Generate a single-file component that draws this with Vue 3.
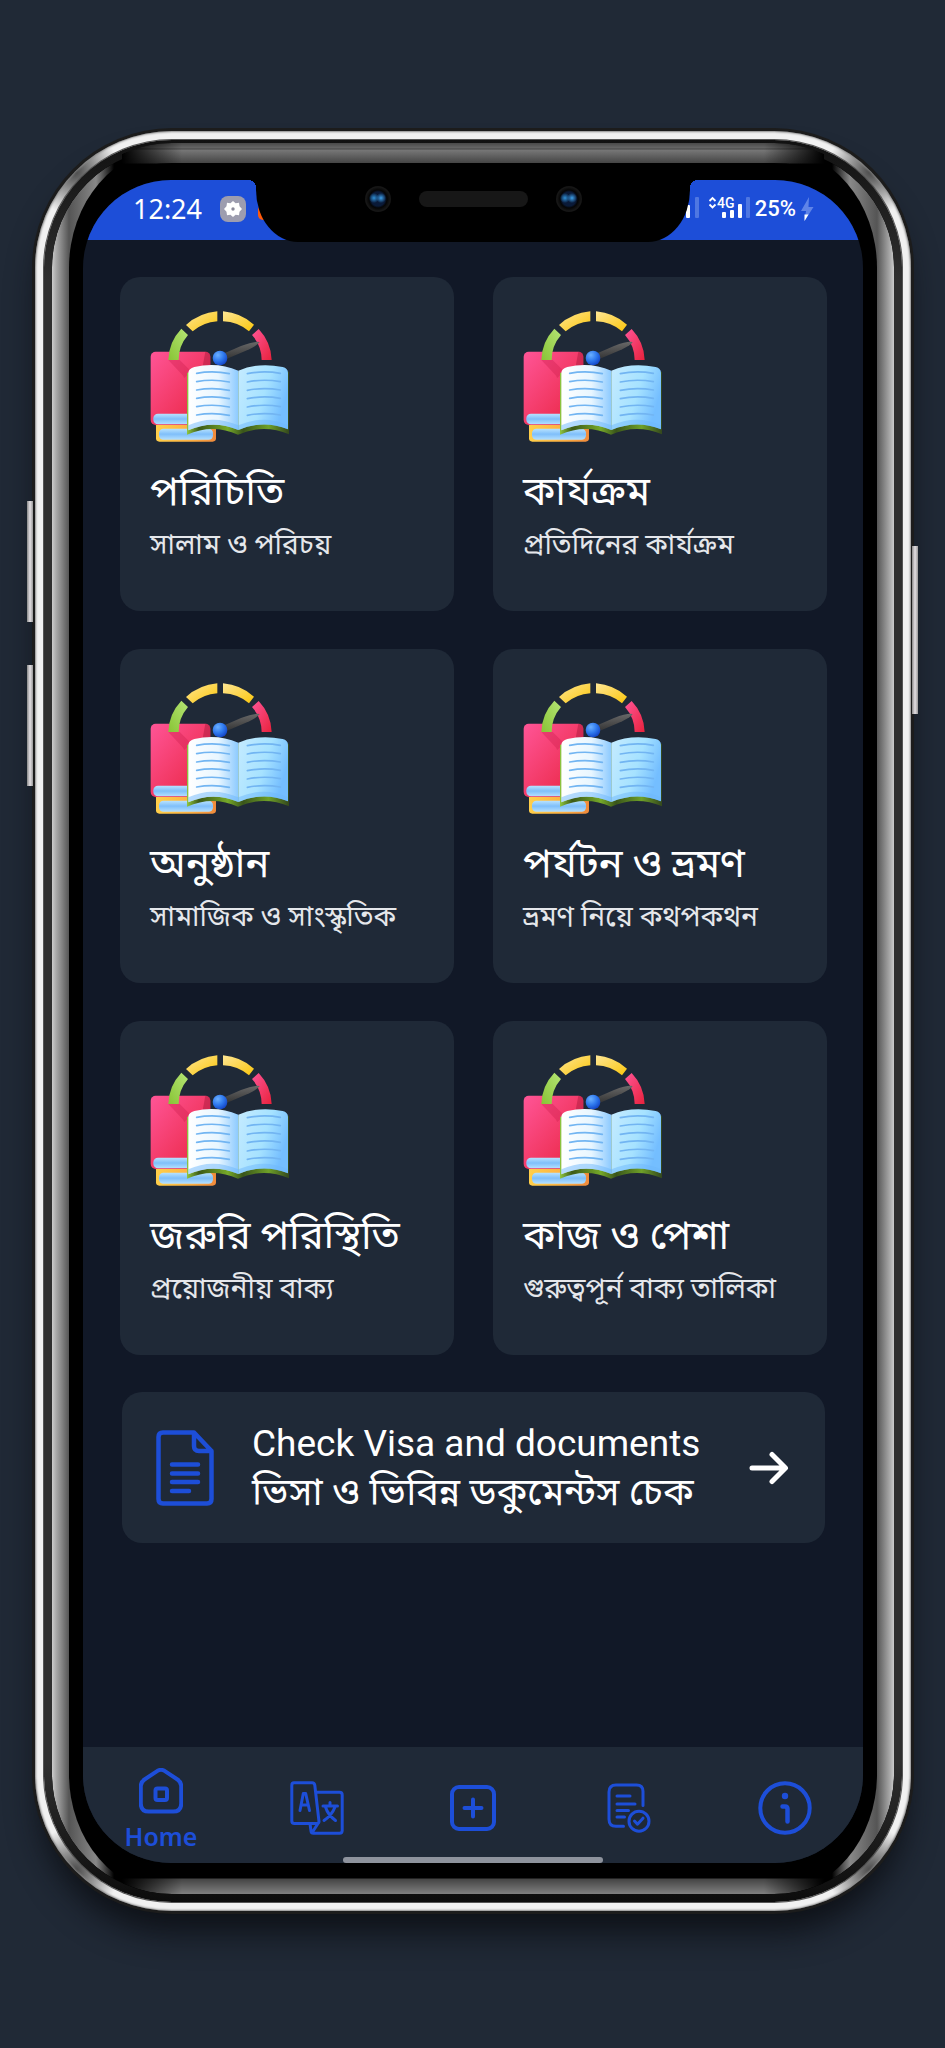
<script setup>
const topics = [
  { title: 'পরিচিতি', text: 'সালাম ও পরিচয়' },
  { title: 'কার্যক্রম', text: 'প্রতিদিনের কার্যক্রম' },
  { title: 'অনুষ্ঠান', text: 'সামাজিক ও সাংস্কৃতিক' },
  { title: 'পর্যটন ও ভ্রমণ', text: 'ভ্রমণ নিয়ে কথপকথন' },
  { title: 'জরুরি পরিস্থিতি', text: 'প্রয়োজনীয় বাক্য' },
  { title: 'কাজ ও পেশা', text: 'গুরুত্বপূর্ন বাক্য তালিকা' },
]
const pageLines = [218, 243, 268, 293, 318, 343]
</script>

<template>
  <div class="page">
    <svg class="defs" width="0" height="0" aria-hidden="true">
      <defs>
        <linearGradient id="g-green" x1="1" y1="0" x2="0" y2="1"><stop offset="0" stop-color="#b5e575" /><stop offset="1" stop-color="#88c435" /></linearGradient>
        <linearGradient id="g-yellow" x1="0" y1="0" x2="1" y2="1"><stop offset="0" stop-color="#fee695" /><stop offset="1" stop-color="#fbc60c" /></linearGradient>
        <linearGradient id="g-pink" x1="0" y1="0" x2="1" y2="1"><stop offset="0" stop-color="#ff5597" /><stop offset="1" stop-color="#e8223c" /></linearGradient>
        <linearGradient id="g-needle" x1="0" y1="0" x2="0" y2="1"><stop offset="0" stop-color="#686868" /><stop offset="1" stop-color="#353535" /></linearGradient>
        <radialGradient id="g-ball" cx=".35" cy=".3" r=".8"><stop offset="0" stop-color="#6bb0ff" /><stop offset=".5" stop-color="#2f79ee" /><stop offset="1" stop-color="#0d3bc0" /></radialGradient>
        <linearGradient id="g-left" x1="0" y1="0" x2="1" y2="0"><stop offset="0" stop-color="#fff" /><stop offset=".6" stop-color="#e8f6ff" /><stop offset="1" stop-color="#8ccaff" /></linearGradient>
        <linearGradient id="g-right" x1="0" y1="0" x2="1" y2=".4"><stop offset="0" stop-color="#c5ebff" /><stop offset=".6" stop-color="#a6e2ff" /><stop offset="1" stop-color="#74beff" /></linearGradient>
        <linearGradient id="g-cover" x1="0" y1="0" x2="1" y2="0"><stop offset="0" stop-color="#8fc640" /><stop offset=".12" stop-color="#3c5a18" /><stop offset=".4" stop-color="#76a929" /><stop offset=".55" stop-color="#39541a" /><stop offset=".8" stop-color="#6fa128" /><stop offset="1" stop-color="#33471d" /></linearGradient>
        <linearGradient id="g-orange" x1="0" y1="0" x2="1" y2="0"><stop offset="0" stop-color="#ffcf4a" /><stop offset=".6" stop-color="#fcae42" /><stop offset="1" stop-color="#f08a3c" /></linearGradient>
        <linearGradient id="g-paper" x1="0" y1="0" x2="0" y2="1"><stop offset="0" stop-color="#b9e3ff" /><stop offset=".5" stop-color="#7fbffa" /><stop offset="1" stop-color="#b4e0ff" /></linearGradient>
        <symbol id="books" viewBox="27 30 420 396">
          <rect x="45" y="366" width="180" height="59" rx="10" fill="url(#g-orange)" />
          <rect x="54" y="386" width="162" height="33" rx="13" fill="url(#g-paper)" />
          <rect x="29" y="155" width="179" height="220" rx="15" fill="url(#g-pink)" />
          <path d="M193 155q15 0 15 15v40h-25z" fill="#a4183c" opacity=".45" />
          <path d="M82 180h34l34 34-20 20-5-8z" fill="#c21747" opacity=".3" />
          <rect x="37" y="341" width="120" height="32" rx="14" fill="url(#g-paper)" />
          <path d="M82 180A155 146 0 0 1 121 86L141 105A124 117 0 0 0 113 180Z" fill="url(#g-green)" />
          <path d="M135 75A155 146 0 0 1 229 34V64A124 117 0 0 0 155 94Z" fill="url(#g-yellow)" />
          <path d="M246 34A155 146 0 0 1 339 74L324 94A124 117 0 0 0 246 64Z" fill="url(#g-yellow)" />
          <path d="M353 87A155 146 0 0 1 392 180H362A124 117 0 0 0 333 105Z" fill="url(#g-pink)" />
          <path d="M250 160L300 138Q340 123 356 126Q352 134 325 148L258 176Z" fill="url(#g-needle)" />
          <circle cx="237" cy="174" r="22" fill="url(#g-ball)" />
          <path d="M138 218V404Q215 370 291 404Q368 370 444 403V215Z" fill="url(#g-cover)" />
          <path d="M142 218Q143 206 160 201Q230 185 292 212V390Q215 358 142 391Z" fill="url(#g-left)" />
          <path d="M292 212Q352 186 425 201Q441 205 441 219V388Q368 358 292 390Z" fill="url(#g-right)" />
          <path d="M142 376Q215 342 292 376V390Q215 358 142 391ZM292 376Q368 342 441 376V388Q368 358 292 390Z" fill="#6db8fb" opacity=".5" />
          <g fill="none" stroke="#72b5f2" stroke-width="5" stroke-linecap="round">
            <path v-for="y in pageLines" :key="y" :d="`M167 ${y + 2}Q215 ${y - 7} 265 ${y + 3}M319 ${y + 3}Q368 ${y - 7} 418 ${y + 2}`" />
          </g>
        </symbol>
      </defs>
    </svg>

    <div class="phone">
      <i class="key key-up"></i><i class="key key-down"></i><i class="key key-power"></i>
      <div class="rim">
        <div class="groove">
          <div class="bezel">
            <div class="screen">
              <header class="status">
                <span class="clock">12:24</span>
                <svg class="gear" viewBox="0 0 26 26" aria-hidden="true">
                  <rect width="26" height="26" rx="8" fill="#9d9daf" />
                  <path d="M13 5l2.600 2.200 3.400-.4.5 3.400L22 13l-2.500 2.800-.5 3.400-3.400-.4L13 21l-2.600-2.200-3.400.4-.5-3.400L4 13l2.500-2.800.5-3.400 3.400.4z" fill="#fff" />
                  <circle cx="13" cy="13" r="1.700" fill="#8a8a9a" />
                </svg>
                <svg class="ember" viewBox="0 0 14 26" aria-hidden="true"><rect y="9" width="14" height="15" rx="5" fill="#ff5a0a" /></svg>
                <svg class="signal" viewBox="0 0 70 26" aria-hidden="true">
                  <g fill="#fff">
                    <rect x="1" y="9" width="4" height="13" rx="1" />
                    <rect x="37" y="16" width="4" height="6" rx="1" /><rect x="45" y="14" width="4" height="8" rx="1" /><rect x="53" y="8" width="4" height="14" rx="1" />
                  </g>
                  <g fill="#4f77e2"><rect x="10" y="1" width="4" height="21" rx="1" /><rect x="61" y="1" width="4" height="21" rx="1" /></g>
                  <path d="M24.500 5l3-3 3 3M24.500 8.500l3 3 3-3" fill="none" stroke="#fff" stroke-width="1.800" />
                  <text x="32" y="12" class="net">4G</text>
                </svg>
                <span class="charge">25%</span>
                <svg class="bolt" viewBox="0 0 14 26" aria-hidden="true">
                  <path d="M9 1L1 15h5L4.500 25 13.500 11H8.500z" fill="#5f84e8" /><path d="M4.500 18.500h4L4.500 25z" fill="#fff" />
                </svg>
              </header>
              <div class="notch"><i class="lens"></i><i class="speaker"></i><i class="lens"></i></div>

              <main class="content">
                <div class="topics">
                  <a v-for="t in topics" :key="t.title" class="topic" href="#">
                    <svg class="books" aria-hidden="true"><use href="#books" /></svg>
                    <h2>{{ t.title }}</h2>
                    <p>{{ t.text }}</p>
                  </a>
                </div>
                <a class="visa" href="#">
                  <svg class="file" viewBox="0 0 58 76" fill="none" stroke="#1d4ed8" stroke-width="4.500" stroke-linejoin="round" stroke-linecap="round" aria-hidden="true">
                    <path d="M7 2.500H38L55.500 21V69q0 4.500-4.500 4.500H7q-4.500 0-4.500-4.500V7q0-4.500 4.500-4.500zM38 2.500V16q0 5 5 5H55.500M16 34.500H42M16 43.500H42M16 52H42M16 61H33" />
                  </svg>
                  <span class="visa-text"><span class="latin">Check Visa and documents</span><span>ভিসা ও ভিবিন্ন ডকুমেন্টস চেক</span></span>
                  <svg class="arrow" viewBox="0 0 40 34" fill="none" stroke="#fff" stroke-width="5" stroke-linecap="round" stroke-linejoin="round" aria-hidden="true"><path d="M3 17H36M23 3.500L36.500 17 23 30.500" /></svg>
                </a>
              </main>

              <nav class="tabs">
                <a href="#" class="home">
                  <svg width="44" height="46" viewBox="0 0 44 46"><path d="M18.500 2.800Q22 .8 25.500 2.800L38.500 11.500Q42.200 14 42.200 18V35.500q0 8-8 8H9.800q-8 0-8-8V18q0-4 3.700-6.500z" /><rect x="16.500" y="20.500" width="11.500" height="11.500" rx="2" /></svg>
                  <span>Home</span>
                </a>
                <a href="#" aria-label="Translate">
                  <svg width="54" height="54" viewBox="0 0 54 54" class="thin"><path d="M4 1.800H22q2.500 0 2.800 2.500L29 40.500Q29 42.500 26 42.500H4.500Q1.800 42.500 1.800 40V4.500Q1.800 1.800 4 1.800zM26 11.200H49.500q2.700 0 2.700 2.700V49.500q0 2.700-2.700 2.700H23.500Q21.200 52.200 21 50L20 42.500M29 41L22.500 51" /><path d="M10 29.500L13.300 12.500h2.400L19.500 29.500M11.500 24H18" stroke-width="3" /><path d="M33 25H47.500M40 21.500V25M35.500 26Q38 34 45.500 39.500M45 26Q42 34 34 39.500" stroke-width="3" /></svg>
                </a>
                <a href="#" aria-label="Add">
                  <svg width="46" height="46" viewBox="0 0 46 46"><rect x="2" y="2" width="42" height="42" rx="7" /><path d="M23 14.500V31.500M14.500 23H31.500" /></svg>
                </a>
                <a href="#" aria-label="Documents">
                  <svg width="44" height="50" viewBox="0 0 44 50" class="thin"><path d="M16.500 43.200H9q-7 0-7-7V9Q2 2 9 2H29.500q6.500 0 6.500 6.500V22.500M10 13H23M10 21H28M10 27.500H21.500M10 34H17.500" /><circle cx="32" cy="38.200" r="10" /><path d="M27.500 38l3 3.200 5.500-6" /></svg>
                </a>
                <a href="#" aria-label="Information">
                  <svg width="54" height="54" viewBox="0 0 54 54"><circle cx="27" cy="27" r="24.700" /><circle cx="27" cy="15" r="3.200" fill="#1d4ed8" stroke="none" /><path d="M24.500 25.500H27Q29.500 25.500 29.500 28V40.500" stroke-width="4.500" /></svg>
                </a>
              </nav>
              <i class="handle"></i>
            </div>
          </div>
        </div>
      </div>
    </div>
  </div>
</template>

<style>
body { background: #202936; }
</style>

<style scoped>
* { box-sizing: border-box; }
.page {
  display: flex;
  min-height: 100vh;
  padding: 128px 31px 134px 32px;
  overflow: hidden;
  background: #202936;
  font-family: Roboto, "Noto Sans Bengali", "Noto Sans", sans-serif;
  color: #fff;
}
.defs { position: absolute; }
a { color: inherit; text-decoration: none; }
.phone {
  position: relative;
  display: flex;
  flex: 1;
  min-width: 0;
  padding: 3px;
  border-radius: 140px;
  background: #1c1c1c;
  box-shadow: 0 26px 32px -8px rgba(10, 13, 18, .85);
}
.rim {
  display: flex;
  flex: 1;
  min-width: 0;
  padding: 9px;
  border-radius: 137px;
  background:
    radial-gradient(circle at 40px 40px, rgba(40, 40, 40, .85), transparent 44px),
    radial-gradient(circle at calc(100% - 40px) 40px, rgba(40, 40, 40, .85), transparent 44px),
    radial-gradient(circle at 40px calc(100% - 40px), rgba(40, 40, 40, .85), transparent 44px),
    radial-gradient(circle at calc(100% - 40px) calc(100% - 40px), rgba(40, 40, 40, .85), transparent 44px),
    #f1f1f1;
  box-shadow: inset 0 0 2px 1px #8a8a8a;
}
.groove {
  display: flex;
  flex: 1;
  min-width: 0;
  padding: 8px;
  border-radius: 128px;
  background: linear-gradient(#111, #2f2f2f 140px, #2f2f2f calc(100% - 140px), #0c0c0c);
  box-shadow: 0 0 0 1px #555;
}
.bezel {
  position: relative;
  display: flex;
  flex: 1;
  min-width: 0;
  padding: 32px 31px 31px;
  border-radius: 120px;
  background: #000;
}
.bezel::before,
.bezel::after {
  content: "";
  position: absolute;
  inset: 0;
  border: 0 solid transparent;
  border-radius: 120px;
  mask: linear-gradient(#000 0 0) padding-box exclude, linear-gradient(#000 0 0) border-box;
}
.bezel::before {
  border-width: 0 17px;
  background: linear-gradient(90deg, #ccc, #aaa 4px, #555 17px, #888 44px, transparent 62px calc(100% - 62px), #888 calc(100% - 44px), #555 calc(100% - 17px), #aaa calc(100% - 4px), #ccc) border-box;
}
.bezel::after {
  inset: -5px 0 0;
  border-width: 20px 0 16px;
  background:
    linear-gradient(90deg, #000 70px, transparent 130px calc(100% - 130px), #000 calc(100% - 70px)) border-box,
    linear-gradient(#484848, #666 5px, #444 6px, #777 7px, #454545 20px, #000 21px calc(100% - 16px), #444 calc(100% - 15px), #808080) border-box;
  clip-path: inset(0 70px);
}
.screen {
  position: relative;
  z-index: 1;
  display: flex;
  flex: 1;
  flex-direction: column;
  min-width: 0;
  overflow: hidden;
  border-radius: 88px;
  background: #111827;
}
.key {
  position: absolute;
  width: 6px;
  background: linear-gradient(90deg, #888, #e4e0e4 50%, #999);
}
.key-up { top: 373px; left: -5px; height: 121px; }
.key-down { top: 537px; left: -5px; height: 121px; }
.key-power { top: 418px; right: -4px; height: 168px; }

.status {
  display: flex;
  align-items: center;
  height: 60px;
  padding: 0 49px 2px 50px;
  background: #1d4ed8;
}
.clock { font: 27px/36px "Noto Sans", sans-serif; }
.gear { width: 26px; height: 26px; margin-left: 18px; }
.ember { width: 14px; height: 26px; margin-left: 12px; }
.signal { width: 70px; height: 26px; margin-left: auto; }
.net { font: 500 14px Roboto, sans-serif; fill: #fff; }
.charge { font: 500 22px/26px Roboto, sans-serif; }
.bolt { width: 14px; height: 26px; margin-left: 4px; }
.notch {
  position: absolute;
  top: 0;
  left: 50%;
  display: flex;
  align-items: center;
  justify-content: center;
  gap: 28px;
  width: 434px;
  height: 62px;
  padding-bottom: 24px;
  border-radius: 0 0 42px 42px / 0 0 52px 52px;
  background: #000;
  transform: translateX(-50%);
}
.notch::before,
.notch::after {
  content: "";
  position: absolute;
  top: 0;
  width: 8px;
  height: 8px;
}
.notch::before { right: 100%; background: radial-gradient(circle at 0 100%, transparent 8px, #000 8px); }
.notch::after { left: 100%; background: radial-gradient(circle at 100% 100%, transparent 8px, #000 8px); }
.lens {
  width: 26px;
  height: 26px;
  border-radius: 50%;
  background:
    radial-gradient(circle at 9px 12px, #2f8fd5, transparent 5px),
    radial-gradient(circle at 16px 12px, #3d9fe8, transparent 5px),
    radial-gradient(circle, #0a1a38 7px, #050505 9px, #161616 12px);
}
.speaker { width: 109px; height: 16px; border-radius: 8px; background: #171717; }

.content {
  display: flex;
  flex: 1;
  flex-direction: column;
  padding: 37px 36px 39px 37px;
}
.topics {
  display: grid;
  grid-template-columns: repeat(2, minmax(0, 1fr));
  gap: 38px 39px;
}
.topic {
  display: flex;
  flex-direction: column;
  aspect-ratio: 1;
  padding: 33px 30px;
  border-radius: 20px;
  background: #1f2937;
}
.books { flex: none; width: 140px; height: 132px; }
h2 { margin: 26px 0 0; font-size: 40px; font-weight: 400; line-height: 48px; white-space: nowrap; }
p { margin: 9px 0 0; font-size: 28px; line-height: 40px; color: #e5e7eb; white-space: nowrap; }
.visa {
  display: flex;
  align-items: center;
  min-height: 151px;
  margin: 37px 2px 0;
  padding: 0 36px 0 34px;
  border-radius: 20px;
  background: #1f2937;
}
.file { flex: none; width: 58px; height: 76px; }
.visa-text { display: flex; flex: 1; flex-direction: column; margin-left: 38px; font-size: 38px; line-height: 48px; white-space: nowrap; }
.latin { font-size: 37px; }
.arrow { flex: none; width: 40px; height: 34px; }

.tabs {
  display: grid;
  grid-template-columns: repeat(5, 1fr);
  height: 116px;
  padding-top: 6px;
  background: #1f2937;
}
.tabs a {
  display: flex;
  flex-direction: column;
  align-items: center;
  justify-content: center;
  color: #1d4ed8;
  font: 600 25px/24px "Noto Sans", sans-serif;
}
.tabs svg { fill: none; stroke: #1d4ed8; stroke-width: 4; stroke-linecap: round; stroke-linejoin: round; }
.tabs .thin { stroke-width: 3; }
.home svg { margin-bottom: 10px; }
.handle {
  position: absolute;
  bottom: 0;
  left: 50%;
  width: 260px;
  height: 6px;
  border-radius: 3px;
  background: #8e939d;
  transform: translateX(-50%);
}
</style>
